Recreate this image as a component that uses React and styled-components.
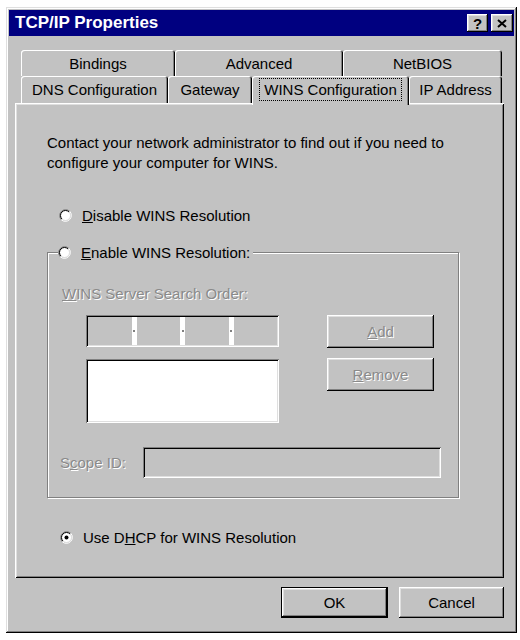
import React from 'react';
import styled, { createGlobalStyle } from 'styled-components';

const GlobalStyle = createGlobalStyle`
  html, body {
    margin: 0;
    padding: 0;
    background: #fff;
  }
  body {
    font-family: "Liberation Sans", Arial, sans-serif;
    font-size: 15px;
    color: #000;
  }
`;

const raised = `
  box-shadow: inset -1px -1px #000, inset 1px 1px #fff,
    inset -2px -2px #808080, inset 2px 2px #dfdfdf;
`;

const sunken = `
  box-shadow: inset 1px 1px #808080, inset -1px -1px #fff,
    inset 2px 2px #000, inset -2px -2px #dfdfdf;
`;

const Page = styled.div`
  padding: 7px 0 0 6px;
`;

const Window = styled.div`
  width: 511px;
  height: 626px;
  box-sizing: border-box;
  padding: 3px;
  background: #c2c2c2;
  box-shadow: inset -1px -1px #000, inset 1px 1px #dfdfdf,
    inset -2px -2px #808080, inset 2px 2px #fff;
  display: flex;
  flex-direction: column;
`;

const TitleBar = styled.div`
  height: 26px;
  flex: none;
  background: #000080;
  display: flex;
  align-items: center;
  justify-content: space-between;
  padding: 0 1px 0 6px;
`;

const Title = styled.span`
  color: #fff;
  font-weight: bold;
  font-size: 17px;
`;

const TitleButtons = styled.div`
  display: flex;
  gap: 3px;
`;

const TitleButton = styled.div`
  width: ${p => p.$w}px;
  height: 18px;
  background: #c2c2c2;
  ${raised}
  display: flex;
  align-items: center;
  justify-content: center;
  font-weight: bold;
  font-size: 15px;
`;

const Body = styled.div`
  flex: 1;
  display: flex;
  flex-direction: column;
  padding: 14px 9px 0 6px;
`;

const TabRow = styled.div`
  display: flex;
  align-items: flex-start;
  height: ${p => p.$h}px;
  margin-left: 6px;
  position: relative;
  z-index: ${p => (p.$front ? 2 : 1)};
`;

const Tab = styled.div`
  width: ${p => p.$w}px;
  height: ${p => (p.$active ? p.$h + 2 : p.$h)}px;
  margin-bottom: ${p => (p.$active ? -2 : 0)}px;
  box-sizing: border-box;
  display: flex;
  align-items: center;
  justify-content: center;
  background: #c2c2c2;
  border-radius: 3px 3px 0 0;
  box-shadow: inset 1px 1px #fff, inset -1px 0 #000, inset -2px 0 #808080;
  padding-bottom: ${p => (p.$active ? 2 : 0)}px;
`;

const Focus = styled.span`
  border: 1px dotted #000;
  padding: 2px 4px;
`;

const Panel = styled.div`
  width: 489px;
  height: 475px;
  box-sizing: border-box;
  background: #c2c2c2;
  box-shadow: inset 1px 1px #fff, inset -1px -1px #000,
    inset 2px 2px #dfdfdf, inset -2px -2px #808080;
  padding: 30px 20px 0 32px;
  display: flex;
  flex-direction: column;
  position: relative;
  z-index: 1;
`;

const Intro = styled.p`
  margin: 0;
  line-height: 20px;
`;

const RadioRow = styled.label`
  display: flex;
  align-items: center;
  gap: 10px;
  height: 20px;
  margin: ${p => p.$m || '0'};
  background: #c2c2c2;
`;

const U = styled.span`
  text-decoration: underline;
`;

const GroupBox = styled.div`
  position: relative;
  width: 412px;
  height: 246px;
  box-sizing: border-box;
  margin-top: 27px;
  border: 1px solid #808080;
  box-shadow: inset 1px 1px #fff, 1px 1px #fff;
  padding: 31px 0 0 14px;
  display: flex;
  flex-direction: column;
`;

const Legend = styled.div`
  position: absolute;
  top: -11px;
  left: 10px;
  padding-right: 3px;
  background: #c2c2c2;
`;

const Disabled = styled.span`
  color: #8a8a8a;
  text-shadow: 1px 1px 0 #fff;
`;

const Label = styled(Disabled)`
  display: block;
  line-height: 20px;
`;

const ScopeLabel = styled(Disabled)`
  width: 83px;
  flex: none;
`;

const ServerArea = styled.div`
  display: flex;
  gap: 48px;
  margin: 11px 0 0 24px;
`;

const ListColumn = styled.div`
  display: flex;
  flex-direction: column;
  gap: 12px;
`;

const IpField = styled.div`
  width: 193px;
  height: 32px;
  box-sizing: border-box;
  padding: 2px;
  display: flex;
  background: #c2c2c2;
  ${sunken}
`;

const IpSegment = styled.div`
  flex: 1;
`;

const IpDot = styled.div`
  width: 5px;
  background: #fff;
  display: flex;
  align-items: center;
  justify-content: center;
  &::after {
    content: '';
    width: 2px;
    height: 2px;
    background: #808080;
  }
`;

const ListBox = styled.div`
  width: 193px;
  height: 64px;
  background: #fff;
  ${sunken}
`;

const ButtonColumn = styled.div`
  display: flex;
  flex-direction: column;
  gap: 10px;
`;

const Button = styled.div`
  width: ${p => p.$w}px;
  height: ${p => p.$h}px;
  box-sizing: border-box;
  display: flex;
  align-items: center;
  justify-content: center;
  background: #c2c2c2;
  ${raised}
  ${p =>
    p.$default &&
    `box-shadow: inset 0 0 0 1px #000, inset -2px -2px #000, inset 2px 2px #fff,
      inset -3px -3px #808080, inset 3px 3px #dfdfdf;`}
`;

const ScopeRow = styled.div`
  display: flex;
  align-items: center;
  margin: 24px 0 0 -2px;
`;

const ScopeField = styled.div`
  width: 298px;
  height: 31px;
  background: #c2c2c2;
  ${sunken}
`;

const Footer = styled.div`
  display: flex;
  justify-content: flex-end;
  gap: 11px;
  margin-top: 9px;
  padding-right: 1px;
`;

const Radio = ({ checked }) => (
  <svg width="13" height="13" viewBox="0 0 13 13">
    <circle cx="6.5" cy="6.5" r="5" fill="#fff" />
    <path d="M2.26 10.74 A6 6 0 0 1 10.74 2.26" stroke="#808080" fill="none" />
    <path d="M2.96 10.04 A5 5 0 0 1 10.04 2.96" stroke="#000" fill="none" />
    <path d="M10.74 2.26 A6 6 0 0 1 2.26 10.74" stroke="#fff" fill="none" />
    <path d="M10.04 2.96 A5 5 0 0 1 2.96 10.04" stroke="#dfdfdf" fill="none" />
    {checked && <circle cx="6.5" cy="6.5" r="2" fill="#000" />}
  </svg>
);

const CloseIcon = () => (
  <svg width="10" height="9" viewBox="0 0 10 9">
    <path d="M1 1 L9 8 M9 1 L1 8" stroke="#000" strokeWidth="2" />
  </svg>
);

export default function App() {
  return (
    <Page>
      <GlobalStyle />
      <Window>
        <TitleBar>
          <Title>TCP/IP Properties</Title>
          <TitleButtons>
            <TitleButton $w={21}>?</TitleButton>
            <TitleButton $w={22}>
              <CloseIcon />
            </TitleButton>
          </TitleButtons>
        </TitleBar>
        <Body>
          <TabRow $h={26}>
            <Tab $w={154} $h={26}>Bindings</Tab>
            <Tab $w={168} $h={26}>Advanced</Tab>
            <Tab $w={159} $h={26}>NetBIOS</Tab>
          </TabRow>
          <TabRow $h={27} $front>
            <Tab $w={147} $h={27}>DNS Configuration</Tab>
            <Tab $w={84} $h={27}>Gateway</Tab>
            <Tab $w={157} $h={27} $active>
              <Focus>WINS Configuration</Focus>
            </Tab>
            <Tab $w={93} $h={27}>IP Address</Tab>
          </TabRow>
          <Panel>
            <Intro>
              Contact your network administrator to find out if you need to
              <br />
              configure your computer for WINS.
            </Intro>
            <RadioRow $m="32px 0 0 12px">
              <Radio />
              <span>
                <U>D</U>isable WINS Resolution
              </span>
            </RadioRow>
            <GroupBox>
              <Legend>
                <RadioRow>
                  <Radio />
                  <span>
                    <U>E</U>nable WINS Resolution:
                  </span>
                </RadioRow>
              </Legend>
              <Label>
                <U>W</U>INS Server Search Order:
              </Label>
              <ServerArea>
                <ListColumn>
                  <IpField>
                    <IpSegment />
                    <IpDot />
                    <IpSegment />
                    <IpDot />
                    <IpSegment />
                    <IpDot />
                    <IpSegment />
                  </IpField>
                  <ListBox />
                </ListColumn>
                <ButtonColumn>
                  <Button $w={107} $h={33}>
                    <Disabled>
                      <U>A</U>dd
                    </Disabled>
                  </Button>
                  <Button $w={107} $h={33}>
                    <Disabled>
                      <U>R</U>emove
                    </Disabled>
                  </Button>
                </ButtonColumn>
              </ServerArea>
              <ScopeRow>
                <ScopeLabel>
                  S<U>c</U>ope ID:
                </ScopeLabel>
                <ScopeField />
              </ScopeRow>
            </GroupBox>
            <RadioRow $m="29px 0 0 13px">
              <Radio checked />
              <span>
                Use D<U>H</U>CP for WINS Resolution
              </span>
            </RadioRow>
          </Panel>
          <Footer>
            <Button $w={107} $h={31} $default>
              OK
            </Button>
            <Button $w={105} $h={31}>
              Cancel
            </Button>
          </Footer>
        </Body>
      </Window>
    </Page>
  );
}
